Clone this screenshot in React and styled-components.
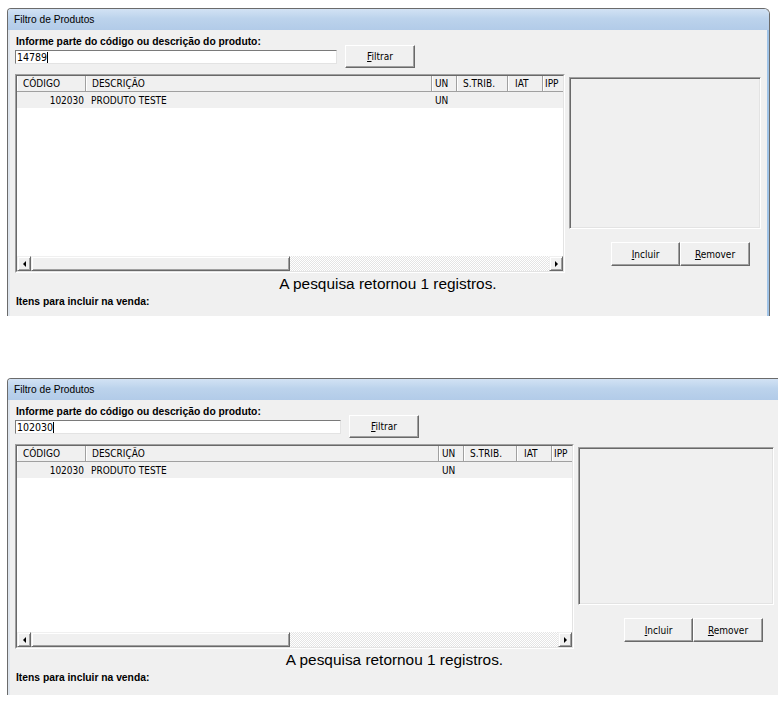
import React from "react";
import styled, { createGlobalStyle } from "styled-components";

const GlobalStyle = createGlobalStyle`
  html, body { margin: 0; padding: 0; background: #ffffff; overflow: hidden; }
  body { font-family: "Liberation Sans", Arial, sans-serif; }
`;

const NARROW = `"Liberation Sans Narrow", "Arial Narrow", "DejaVu Sans Condensed", "Liberation Sans", sans-serif`;

const Page = styled.div`
  display: flex;
  flex-direction: column;
  gap: 62px;
  padding: 8px 0 0 7px;
  width: 778px;
  box-sizing: border-box;
  overflow: hidden;
`;

const Frame = styled.div`
  width: ${(p) => p.$width}px;
  height: ${(p) => p.$height}px;
  flex: none;
  box-sizing: border-box;
  border: 1px solid #6b6b6b;
  border-bottom: none;
  border-radius: 4px 6px 0 0;
  overflow: hidden;
  display: flex;
  flex-direction: column;
  background: #f0f0f0;
`;

const TitleBar = styled.div`
  height: 21px;
  flex: none;
  display: flex;
  align-items: center;
  padding-left: 6px;
  background: linear-gradient(#d2e2f4, #bcd3ec 45%, #b2cbe8);
  font-family: "Liberation Sans", Arial, sans-serif;
  font-size: 10.2px;
  color: #000;
`;

const Client = styled.div`
  flex: 1;
  display: flex;
  flex-direction: column;
  padding: 6px 6px 0 5px;
  border-left: 2px solid #dfe6ee;
  border-right: 2px solid #9fc3e7;
  background: #f0f0f0;
`;

const SearchRow = styled.div`
  display: flex;
  align-items: flex-end;
  gap: 8px;
`;

const SearchField = styled.div`
  display: flex;
  flex-direction: column;
  gap: 2px;
`;

const BoldLabel = styled.div`
  font-family: "Liberation Sans", Arial, sans-serif;
  font-weight: bold;
  font-size: 10.3px;
  line-height: 12px;
  height: 12px;
  padding-left: 1px;
  margin-top: ${(p) => p.$mt || 0}px;
  color: #000;
`;

const TextBox = styled.div`
  width: ${(p) => p.$width}px;
  height: 14px;
  box-sizing: border-box;
  border: 1px solid;
  border-color: #7a7a7a #e3e3e3 #e3e3e3 #7a7a7a;
  background: #fff;
  display: flex;
  align-items: center;
  padding-left: 1px;
  font-family: ${NARROW};
  font-size: 10.5px;
  color: #000;
`;

const Caret = styled.span`
  display: inline-block;
  width: 1px;
  height: 11px;
  background: #000;
`;

const Button = styled.div`
  width: ${(p) => p.$width}px;
  height: ${(p) => p.$height || 23}px;
  box-sizing: border-box;
  border: 1px solid;
  border-color: #ffffff #696969 #696969 #ffffff;
  box-shadow: inset -1px -1px #a0a0a0;
  background: #f0f0f0;
  display: flex;
  align-items: center;
  justify-content: center;
  font-family: ${NARROW};
  font-size: 10px;
  color: #000;
  margin-bottom: ${(p) => p.$mb || 0}px;
  u { text-decoration: underline; }
`;

const Main = styled.div`
  display: flex;
  height: ${(p) => p.$height}px;
  margin-top: 10px;
`;

const GridOuter = styled.div`
  width: ${(p) => p.$width}px;
  flex: none;
  box-sizing: border-box;
  border: 1px solid;
  border-color: #a0a0a0 #ffffff #ffffff #a0a0a0;
  display: flex;
`;

const GridInner = styled.div`
  flex: 1;
  min-width: 0;
  border: 1px solid;
  border-color: #696969 #e3e3e3 #e3e3e3 #696969;
  background: #fff;
  display: flex;
  flex-direction: column;
  overflow: hidden;
`;

const Row = styled.div`
  display: flex;
  height: 16px;
  flex: none;
  background: #f0f0f0;
  box-sizing: border-box;
  border-bottom: ${(p) => (p.$header ? "1px solid #a0a0a0" : "none")};
  font-family: ${NARROW};
  font-size: 10px;
  color: #000;
`;

const HeadCell = styled.div`
  width: ${(p) => p.$w}px;
  flex: none;
  box-sizing: border-box;
  padding-left: ${(p) => p.$pl}px;
  border-right: 1px solid #a0a0a0;
  box-shadow: inset 1px 0 #ffffff;
  display: flex;
  align-items: center;
  white-space: nowrap;
  overflow: hidden;
`;

const Cell = styled.div`
  width: ${(p) => p.$w}px;
  flex: none;
  box-sizing: border-box;
  padding: ${(p) => (p.$right ? "0 2px 0 0" : `0 0 0 ${p.$pl}px`)};
  display: flex;
  align-items: center;
  justify-content: ${(p) => (p.$right ? "flex-end" : "flex-start")};
  white-space: nowrap;
  overflow: hidden;
`;

const GridBody = styled.div`
  flex: 1;
  background: #fff;
`;

const HScroll = styled.div`
  height: 15px;
  flex: none;
  display: flex;
  background-color: #f4f4f4;
  background-image: repeating-conic-gradient(#ffffff 0 25%, #e4e4e4 0 50%);
  background-size: 2px 2px;
`;

const ScrollPart = styled.div`
  width: ${(p) => p.$w}px;
  flex: none;
  box-sizing: border-box;
  border: 1px solid;
  border-color: #f0f0f0 #696969 #696969 #f0f0f0;
  box-shadow: inset 1px 1px #ffffff, inset -1px -1px #a0a0a0;
  background: #f0f0f0;
  display: flex;
  align-items: center;
  justify-content: center;
`;

const Track = styled.div`
  flex: 1;
`;

const Arrow = styled.span`
  width: 0;
  height: 0;
  border-top: 3px solid transparent;
  border-bottom: 3px solid transparent;
  ${(p) =>
    p.$dir === "left"
      ? "border-right: 3px solid #000;"
      : "border-left: 3px solid #000;"}
`;

const SideColumn = styled.div`
  flex: 1;
  display: flex;
  flex-direction: column;
  margin-left: 4px;
  padding: 3px 0 7px 0;
`;

const Panel = styled.div`
  flex: 1;
  border: 1px solid;
  border-color: #a0a0a0 #ffffff #ffffff #a0a0a0;
  box-shadow: inset 1px 1px #696969, inset -1px -1px #e3e3e3;
  background: #f0f0f0;
`;

const ButtonRow = styled.div`
  display: flex;
  justify-content: flex-end;
  padding-right: 11px;
  margin-top: 13px;
`;

const Status = styled.div`
  text-align: center;
  font-family: "Liberation Sans", Arial, sans-serif;
  font-size: 15.4px;
  line-height: 18px;
  margin-top: 2px;
  color: #000;
`;

function ProductWindow({ width, height, inputWidth, gridWidth, gridHeight, cols, value }) {
  return (
    <Frame $width={width} $height={height}>
      <TitleBar>Filtro de Produtos</TitleBar>
      <Client>
        <SearchRow>
          <SearchField>
            <BoldLabel>Informe parte do código ou descrição do produto:</BoldLabel>
            <TextBox $width={inputWidth}>
              {value}
              <Caret />
            </TextBox>
          </SearchField>
          <Button $width={70} $mb={-4}>
            <span><u>F</u>iltrar</span>
          </Button>
        </SearchRow>
        <Main $height={gridHeight}>
          <GridOuter $width={gridWidth}>
            <GridInner>
              <Row $header>
                {cols.map((c) => (
                  <HeadCell key={c.name} $w={c.w} $pl={c.pl}>
                    {c.name}
                  </HeadCell>
                ))}
              </Row>
              <Row>
                <Cell $w={cols[0].w} $right>102030</Cell>
                <Cell $w={cols[1].w} $pl={5}>PRODUTO TESTE</Cell>
                <Cell $w={cols[2].w} $pl={3}>UN</Cell>
              </Row>
              <GridBody />
              <HScroll>
                <ScrollPart $w={14}><Arrow $dir="left" /></ScrollPart>
                <ScrollPart $w={259} />
                <Track />
                <ScrollPart $w={14}><Arrow $dir="right" /></ScrollPart>
              </HScroll>
            </GridInner>
          </GridOuter>
          <SideColumn>
            <Panel />
            <ButtonRow>
              <Button $width={69} $height={24}><span><u>I</u>ncluir</span></Button>
              <Button $width={70} $height={24}><span><u>R</u>emover</span></Button>
            </ButtonRow>
          </SideColumn>
        </Main>
        <Status>A pesquisa retornou 1 registros.</Status>
        <BoldLabel $mt={3}>Itens para incluir na venda:</BoldLabel>
      </Client>
    </Frame>
  );
}

const cols1 = [
  { name: "CÓDIGO", w: 69, pl: 6 },
  { name: "DESCRIÇÃO", w: 346, pl: 6 },
  { name: "UN", w: 25, pl: 3 },
  { name: "S.TRIB.", w: 51, pl: 6 },
  { name: "IAT", w: 35, pl: 7 },
  { name: "IPP", w: 60, pl: 2 },
];

const cols2 = [
  { name: "CÓDIGO", w: 69, pl: 6 },
  { name: "DESCRIÇÃO", w: 353, pl: 6 },
  { name: "UN", w: 25, pl: 3 },
  { name: "S.TRIB.", w: 53, pl: 6 },
  { name: "IAT", w: 35, pl: 7 },
  { name: "IPP", w: 60, pl: 2 },
];

export default function App() {
  return (
    <>
      <GlobalStyle />
      <Page>
        <ProductWindow
          width={763}
          height={308}
          inputWidth={322}
          gridWidth={550}
          gridHeight={199}
          cols={cols1}
          value="14789"
        />
        <ProductWindow
          width={776}
          height={317}
          inputWidth={326}
          gridWidth={559}
          gridHeight={205}
          cols={cols2}
          value="102030"
        />
      </Page>
    </>
  );
}
